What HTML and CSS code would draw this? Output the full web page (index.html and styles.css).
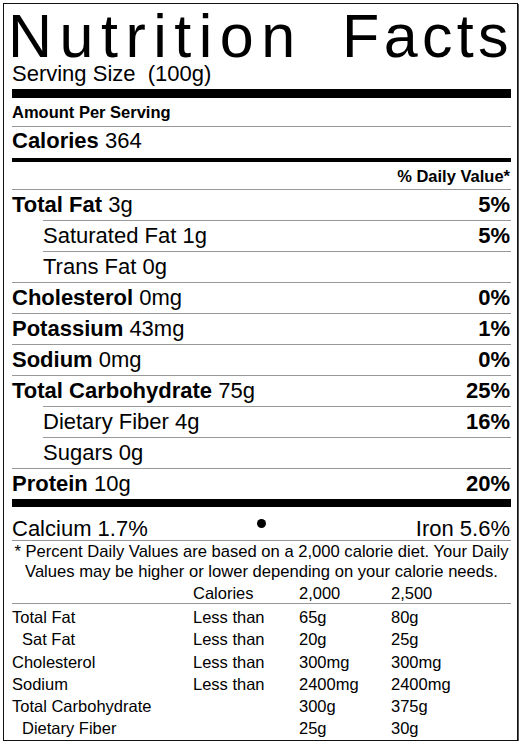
FILE: index.html
```html
<!DOCTYPE html>
<html lang="en">
<head>
<meta charset="utf-8">
<title>Nutrition Facts</title>
<link rel="stylesheet" href="styles.css">
</head>
<body>
<div class="label">
  <div class="title"><span class="w1">Nutrition</span> <span class="w2">Facts</span></div>
  <div class="serving">Serving Size&nbsp; (100g)</div>
  <div class="bar bar-thick"></div>
  <div class="amount">Amount Per Serving</div>
  <div class="calories"><b>Calories</b> 364</div>
  <div class="bar bar-mid"></div>
  <div class="dv">% Daily Value*</div>

  <div class="row"><span><b>Total Fat</b> 3g</span><b>5%</b></div>
  <div class="row sub"><span>Saturated Fat 1g</span><b>5%</b></div>
  <div class="row sub"><span>Trans Fat 0g</span></div>
  <div class="row"><span><b>Cholesterol</b> 0mg</span><b>0%</b></div>
  <div class="row"><span><b>Potassium</b> 43mg</span><b>1%</b></div>
  <div class="row"><span><b>Sodium</b> 0mg</span><b>0%</b></div>
  <div class="row"><span><b>Total Carbohydrate</b> 75g</span><b>25%</b></div>
  <div class="row sub"><span>Dietary Fiber 4g</span><b>16%</b></div>
  <div class="row sub"><span>Sugars 0g</span></div>
  <div class="row"><span><b>Protein</b> 10g</span><b>20%</b></div>

  <div class="bar bar-bottom"></div>
  <div class="vitamins">
    <span class="vit-left">Calcium 1.7%</span>
    <span class="dot"></span>
    <span class="vit-right">Iron 5.6%</span>
  </div>
  <div class="footnote">* Percent Daily Values are based on a 2,000 calorie diet. Your Daily Values may be higher or lower depending on your calorie needs.</div>

  <div class="ref ref-head"><span></span><span>Calories</span><span>2,000</span><span>2,500</span></div>
  <div class="ref-body">
    <div class="ref"><span>Total Fat</span><span>Less than</span><span>65g</span><span>80g</span></div>
    <div class="ref"><span class="ind">Sat Fat</span><span>Less than</span><span>20g</span><span>25g</span></div>
    <div class="ref"><span>Cholesterol</span><span>Less than</span><span>300mg</span><span>300mg</span></div>
    <div class="ref"><span>Sodium</span><span>Less than</span><span>2400mg</span><span>2400mg</span></div>
    <div class="ref"><span>Total Carbohydrate</span><span></span><span>300g</span><span>375g</span></div>
    <div class="ref"><span class="ind">Dietary Fiber</span><span></span><span>25g</span><span>30g</span></div>
  </div>
</div>
</body>
</html>
```
FILE: styles.css
```css
html, body {
  margin: 0;
  padding: 0;
  background: #fff;
}
body {
  font-family: "Liberation Sans", Arial, Helvetica, sans-serif;
  color: #000;
}
.label {
  box-sizing: border-box;
  width: 515px;
  margin: 3px 0 0 3px;
  padding: 6px 6px 0 8px;
  border: 1px solid #111;
  box-shadow: 1px 1px 0 #555;
}
.title {
  font-size: 61px;
  line-height: 52px;
  letter-spacing: 7.5px;
  word-spacing: 15px;
  white-space: nowrap;
  margin-left: -4px;
}
.title .w2 {
  letter-spacing: 4.3px;
}
.serving {
  font-size: 22px;
  line-height: 24px;
}
.bar {
  background: #000;
}
.bar-thick {
  height: 9px;
  margin-top: 3px;
}
.amount {
  font-size: 16.5px;
  line-height: 20px;
  font-weight: bold;
  margin-top: 4px;
  padding-bottom: 4px;
  border-bottom: 1px solid #999;
}
.calories {
  font-size: 22px;
  line-height: 24px;
  padding-top: 2px;
}
.bar-mid {
  height: 4px;
  margin-top: 5px;
}
.dv {
  font-size: 16.5px;
  line-height: 20px;
  font-weight: bold;
  text-align: right;
  padding: 4px 1px 3px 0;
}
.row {
  display: flex;
  justify-content: space-between;
  font-size: 22px;
  line-height: 30px;
  border-top: 1px solid #999;
  padding-right: 1px;
}
.row.sub {
  margin-left: 31px;
}
.bar-bottom {
  height: 8px;
}
.vitamins {
  display: grid;
  grid-template-columns: 1fr auto 1fr;
  align-items: start;
  font-size: 22px;
  line-height: 22px;
  margin-top: 11px;
  border-bottom: 1px solid #999;
}
.vit-right {
  text-align: right;
  padding-right: 1px;
}
.dot {
  width: 9px;
  height: 9px;
  border-radius: 50%;
  background: #000;
  margin-top: 1px;
}
.footnote {
  font-size: 16.6px;
  line-height: 20px;
  text-align: center;
  margin-top: 1px;
}
.ref {
  display: grid;
  grid-template-columns: 181px 106px 92px 1fr;
  font-size: 16.5px;
  line-height: 22.3px;
}
.ref-head {
  line-height: 20px;
  margin-top: 1px;
  border-bottom: 1px solid #999;
}
.ref-body {
  padding-top: 2px;
}
.ind {
  padding-left: 10px;
}
```
